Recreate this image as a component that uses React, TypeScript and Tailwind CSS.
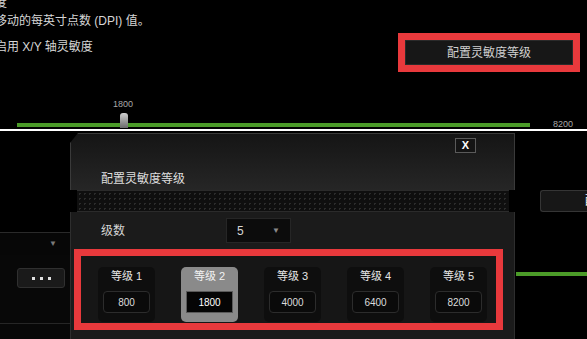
import React from 'react';

const levels = [
  { name: '等级 1', value: '800' },
  { name: '等级 2', value: '1800', active: true },
  { name: '等级 3', value: '4000' },
  { name: '等级 4', value: '6400' },
  { name: '等级 5', value: '8200' },
];

const LevelCard: React.FC<{ name: string; value: string; active?: boolean }> = ({
  name,
  value,
  active,
}) => (
  <div
    className={`w-[57px] h-[55px] rounded-[5px] flex flex-col items-center ${
      active ? 'bg-[#8a8a8a]' : 'bg-[#0e0e0e]'
    }`}
  >
    <div className={`pt-[2px] text-[11px] leading-[14px] ${active ? 'text-[#f2f2f2]' : 'text-[#e6e6e6]'}`}>
      {name}
    </div>
    <div
      className={`mt-[8px] h-[22px] w-[47px] flex items-center justify-center text-[10px] ${
        active
          ? 'bg-[#050505] border border-[#5a5a5a] text-white'
          : 'bg-[#0a0a0a] border border-[#2c2c2c] rounded-[4px] text-[#dcdcdc]'
      }`}
    >
      {value}
    </div>
  </div>
);

export default function App() {
  return (
    <div className="w-[587px] h-[339px] overflow-hidden bg-black font-['Liberation_Sans','Noto_Sans_CJK_SC',sans-serif]">
      {/* Top: sensitivity settings */}
      <div className="h-[129px] overflow-hidden flex flex-col">
        <div className="mt-[-5px] ml-[-17px] text-[12px] leading-[16px] text-[#d6d6d6]">敏度</div>
        <div className="mt-[2px] ml-[-5px] text-[12px] leading-[16px] text-[#d6d6d6]">
          移动的每英寸点数 (DPI) 值。
        </div>
        <div className="mt-[4px] flex items-start">
          <div className="mt-[6px] ml-[-5px] text-[12px] leading-[16px] text-[#d6d6d6]">
            启用 X/Y 轴灵敏度
          </div>
          <div className="ml-auto mr-[7px] w-[182px] h-[39px] border-[7px] border-[#e8393c] bg-black">
            <div className="h-full bg-[#171717] border border-[#2a2a2a] flex items-center justify-center text-[12px] text-[#d0d0d0]">
              配置灵敏度等级
            </div>
          </div>
        </div>

        {/* Slider */}
        <div className="relative h-[57px]">
          <div className="pl-[113px] pt-[26px] text-[9px] leading-[12px] text-[#a8a8a8]">1800</div>
          <div className="mt-[10px] h-[10px] flex items-center">
            <div className="ml-[17px] w-[513px] h-[4px] bg-[#4b9b28]" />
            <div className="ml-[23px] text-[9px] text-[#a8a8a8]">8200</div>
          </div>
          <div className="absolute left-[120px] top-[41px] w-[8px] h-[15px] rounded-t-[3px] bg-[linear-gradient(180deg,#d0d0d0,#6a6a6a)]" />
        </div>
      </div>

      <div className="h-[2px] bg-white" />

      {/* Bottom: dialog over page */}
      <div className="h-[208px] flex">
        {/* Left page remains */}
        <div className="w-[70px] flex flex-col">
          <div className="h-[101px]" />
          <div className="h-[23px] border-t border-[#2a2a2a] bg-[#070707] flex items-center justify-end pr-[13px] text-[8px] text-[#7a7a7a]">
            ▼
          </div>
          <div className="flex-1 bg-[#080808] flex flex-col">
            <div className="mt-[13px] ml-[17px] w-[48px] h-[20px] rounded-[3px] bg-[#1a1a1a] border border-[#303030] flex items-center justify-center gap-[5px]">
              <span className="w-[3px] h-[3px] bg-[#e0e0e0]" />
              <span className="w-[3px] h-[3px] bg-[#e0e0e0]" />
              <span className="w-[3px] h-[3px] bg-[#e0e0e0]" />
            </div>
            <div className="mt-[35px] h-px bg-[#262626]" />
          </div>
        </div>

        {/* Dialog */}
        <div className="w-[445px] mt-[2px] flex flex-col">
          <div className="h-[57px] border-l border-r border-t border-[#3a3a3a] bg-[linear-gradient(180deg,#151515,#262626)] [clip-path:polygon(8px_0,100%_0,100%_100%,0_100%,0_10px)] flex flex-col">
            <div className="mt-[4px] mr-[38px] self-end w-[21px] h-[15px] border border-[#5a5a5a] bg-[#141414] flex items-center justify-center text-[11px] font-bold text-white">
              X
            </div>
            <div className="mt-[18px] pl-[30px] text-[12px] leading-[16px] text-[#dedede]">配置灵敏度等级</div>
          </div>
          <div className="ml-[7px] mr-[6px] h-[22px] border-y border-[#2b2b2b] bg-[#0f0f0f] bg-[radial-gradient(#2c2c2c_1px,transparent_1px)] bg-[length:5px_5px]" />
          <div className="flex-1 bg-[#1b1b1b] border-l border-r border-[#2e2e2e] flex flex-col">
            <div className="mt-[6px] h-[25px] flex items-center">
              <div className="w-[155px] pl-[30px] text-[12px] text-[#d6d6d6]">级数</div>
              <div className="w-[65px] h-[25px] bg-[#0c0c0c] border border-[#262626] flex items-center justify-between pl-[10px] pr-[10px]">
                <span className="text-[12px] text-[#d6d6d6]">5</span>
                <span className="text-[8px] text-[#8a8a8a]">▼</span>
              </div>
            </div>
            <div className="mt-[6px] ml-[3px] w-[429px] h-[81px] border-[7px] border-[#e8393c] bg-[#161616] pl-[17px] pt-[11px] flex gap-[26px]">
              {levels.map((l) => (
                <LevelCard key={l.name} name={l.name} value={l.value} active={l.active} />
              ))}
            </div>
          </div>
        </div>

        {/* Right page remains */}
        <div className="flex-1 flex flex-col">
          <div className="mt-[59px] ml-[25px] h-[22px] rounded-l-[3px] bg-[#171717] border border-r-0 border-[#353535] overflow-hidden flex items-center justify-end">
            <span className="mr-[-10px] text-[12px] text-white">配</span>
          </div>
          <div className="mt-[60px] ml-[1px] h-[4px] bg-[#4b9b28]" />
        </div>
      </div>
    </div>
  );
}
